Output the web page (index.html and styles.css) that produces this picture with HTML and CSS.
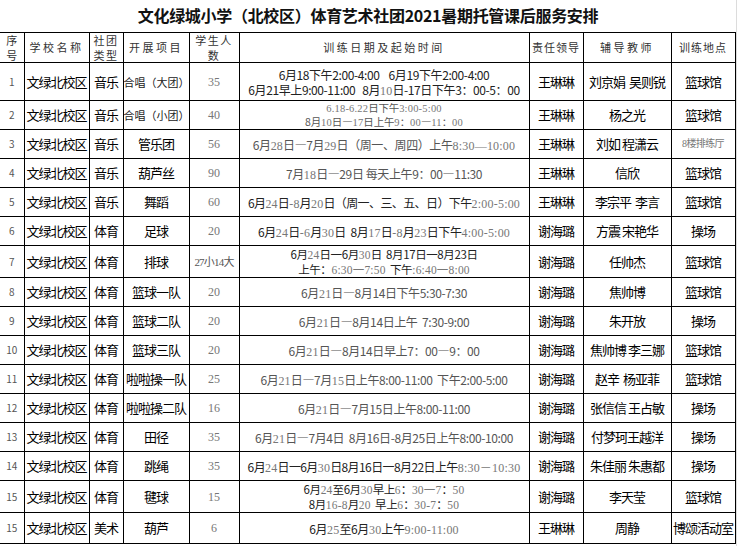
FILE: index.html
```html
<!DOCTYPE html>
<html lang="zh">
<head>
<meta charset="utf-8">
<title>文化绿城小学（北校区）体育艺术社团2021暑期托管课后服务安排</title>
<link rel="stylesheet" href="styles.css">
</head>
<body>
<div class="sheet">
  <h1 class="title">文化绿城小学（北校区）体育艺术社团2021暑期托管课后服务安排</h1>
  <table class="grid">
    <colgroup>
      <col class="c-no"><col class="c-school"><col class="c-type"><col class="c-proj"><col class="c-num"><col class="c-date"><col class="c-lead"><col class="c-teach"><col class="c-place">
    </colgroup>
    <thead>
      <tr class="h-head">
        <th class="first narrow">序<br>号</th>
        <th>学校名称</th>
        <th class="two">社团<br>类型</th>
        <th>开展项目</th>
        <th class="two">学生人<br>数</th>
        <th>训练日期及起始时间</th>
        <th class="lead">责任领导</th>
        <th>辅导教师</th>
        <th class="lead">训练地点</th>
      </tr>
    </thead>
    <tbody>
      <tr class="h-38">
        <td class="first no">1</td><td>文绿北校区</td><td>音乐</td><td class="proj-s">合唱（大团）</td><td class="num">35</td>
        <td class="date dark">6月18下午2:00-4:00&nbsp;&nbsp;&nbsp;&nbsp;6月19下午2:00-4:00<br>6月21早上9:00-11:00&nbsp;&nbsp;&nbsp;8月<span class="s">10</span>日-17日下午3：00-5：00</td>
        <td>王琳琳</td><td>刘京娟&nbsp;&nbsp;吴则锐</td><td>篮球馆</td>
      </tr>
      <tr class="h-29">
        <td class="first no">2</td><td>文绿北校区</td><td>音乐</td><td class="proj-s">合唱（小团）</td><td class="num">40</td>
        <td class="date small"><span class="s">6.18-6.22</span>日下午<span class="s">3:00-5:00</span><br>8月<span class="s">10</span>日—<span class="s">17</span>日上午<span class="s">9</span>：<span class="s">00</span>—<span class="s">11</span>：<span class="s">00</span></td>
        <td>王琳琳</td><td>杨之光</td><td>篮球馆</td>
      </tr>
      <tr class="h-29">
        <td class="first no">3</td><td>文绿北校区</td><td>音乐</td><td>管乐团</td><td class="num">56</td>
        <td class="date">6月<span class="s">28</span>日—7月<span class="s">29</span>日（周一、周四）上午<span class="s">8:30—10:00</span></td>
        <td>王琳琳</td><td>刘如&nbsp;程潇云</td><td class="place-s">8楼排练厅</td>
      </tr>
      <tr class="h-29">
        <td class="first no">4</td><td>文绿北校区</td><td>音乐</td><td>葫芦丝</td><td class="num">90</td>
        <td class="date">7月<span class="s">18</span>日—29日&nbsp;每天上午9：00—11:30</td>
        <td>王琳琳</td><td>信欣</td><td>篮球馆</td>
      </tr>
      <tr class="h-29">
        <td class="first no">5</td><td>文绿北校区</td><td>音乐</td><td>舞蹈</td><td class="num">60</td>
        <td class="date dark wide">6月<span class="s">24</span>日<span class="s">-8</span>月<span class="s">20</span>日（周一、三、五、日）下午<span class="s">2:00-5:00</span></td>
        <td>王琳琳</td><td>李宗平&nbsp;&nbsp;李言</td><td>篮球馆</td>
      </tr>
      <tr class="h-29">
        <td class="first no">6</td><td>文绿北校区</td><td>体育</td><td>足球</td><td class="num">20</td>
        <td class="date dark">6月<span class="s">24</span>日<span class="s">-6</span>月<span class="s">30</span>日&nbsp;&nbsp;8月<span class="s">17</span>日<span class="s">-8</span>月<span class="s">23</span>日下午<span class="s">4:00-5:00</span></td>
        <td>谢海璐</td><td>方震&nbsp;宋艳华</td><td>操场</td>
      </tr>
      <tr class="h-32">
        <td class="first no">7</td><td>文绿北校区</td><td>体育</td><td>排球</td><td class="num tight">27小14大</td>
        <td class="date dark lines">6月<span class="s">24</span>日一6月<span class="s">30</span>日&nbsp;&nbsp;8月17日一8月23日<br>上午：<span class="s">6:30一7:50</span>&nbsp;&nbsp;下午<span class="s">:6:40一8:00</span></td>
        <td>谢海璐</td><td>任帅杰</td><td>篮球馆</td>
      </tr>
      <tr class="h-29">
        <td class="first no">8</td><td>文绿北校区</td><td>体育</td><td>篮球一队</td><td class="num">20</td>
        <td class="date">6月<span class="s">21</span>日—8月14日下午5:30-7:30</td>
        <td>谢海璐</td><td>焦帅博</td><td>篮球馆</td>
      </tr>
      <tr class="h-29">
        <td class="first no">9</td><td>文绿北校区</td><td>体育</td><td>篮球二队</td><td class="num">20</td>
        <td class="date">6月<span class="s">21</span>日—8月14日上午&nbsp;&nbsp;7:30-9:00</td>
        <td>谢海璐</td><td>朱开放</td><td>操场</td>
      </tr>
      <tr class="h-29">
        <td class="first no">10</td><td>文绿北校区</td><td>体育</td><td>篮球三队</td><td class="num">20</td>
        <td class="date">6月<span class="s">21</span>日—8月14日早上7：00—9：00</td>
        <td>谢海璐</td><td>焦帅博&nbsp;李三娜</td><td>篮球馆</td>
      </tr>
      <tr class="h-29">
        <td class="first no">11</td><td>文绿北校区</td><td>体育</td><td>啦啦操一队</td><td class="num">25</td>
        <td class="date">6月<span class="s">21</span>日—7月<span class="s">15</span>日上午8:00-11:00&nbsp;&nbsp;下午2:00-5:00</td>
        <td>谢海璐</td><td>赵辛&nbsp;&nbsp;杨亚菲</td><td>篮球馆</td>
      </tr>
      <tr class="h-29">
        <td class="first no">12</td><td>文绿北校区</td><td>体育</td><td>啦啦操二队</td><td class="num">16</td>
        <td class="date">6月<span class="s">21</span>日—7月15日上午8:00-11:00</td>
        <td>谢海璐</td><td>张信信&nbsp;王占敏</td><td>操场</td>
      </tr>
      <tr class="h-29">
        <td class="first no">13</td><td>文绿北校区</td><td>体育</td><td>田径</td><td class="num">35</td>
        <td class="date">6月<span class="s">21</span>日—7月4日&nbsp;&nbsp;8月16日-8月25日上午8:00-10:00</td>
        <td>谢海璐</td><td>付梦珂王越洋</td><td>操场</td>
      </tr>
      <tr class="h-29">
        <td class="first no">14</td><td>文绿北校区</td><td>体育</td><td>跳绳</td><td class="num">35</td>
        <td class="date dark wide">6月<span class="s">24</span>日一6月<span class="s">30</span>日8月16日一8月22日上午<span class="s">8:30－10:30</span></td>
        <td>谢海璐</td><td>朱佳丽&nbsp;朱惠都</td><td>操场</td>
      </tr>
      <tr class="h-32">
        <td class="first no">15</td><td>文绿北校区</td><td>体育</td><td>毽球</td><td class="num">15</td>
        <td class="date dark lines">6月<span class="s">24</span>至6月<span class="s">30</span>早上<span class="s">6</span>：<span class="s">30一7</span>：<span class="s">50</span><br>8月<span class="s">16-8</span>月<span class="s">20</span>&nbsp;&nbsp;早上<span class="s">6</span>：<span class="s">30-7</span>：<span class="s">50</span></td>
        <td>谢海璐</td><td>李天莹</td><td>篮球馆</td>
      </tr>
      <tr class="h-31">
        <td class="first no">15</td><td>文绿北校区</td><td>美术</td><td>葫芦</td><td class="num">6</td>
        <td class="date dark">6月<span class="s">25</span>至6月<span class="s">30</span>上午<span class="s">9:00-11:00</span></td>
        <td>王琳琳</td><td>周静</td><td>博颂活动室</td>
      </tr>
    </tbody>
  </table>
</div>
</body>
</html>
```

FILE: styles.css
```css
html, body {
  margin: 0;
  padding: 0;
  background: #ffffff;
}

body {
  width: 738px;
  height: 546px;
  overflow: hidden;
  font-family: "Noto Sans CJK SC", "Noto Sans", sans-serif;
  color: #000;
}

.sheet {
  width: 736px;
  height: 546px;
  border-right: 1px solid #dcdcdc;
}

.title {
  margin: 0;
  height: 32px;
  box-sizing: border-box;
  padding-top: 5px;
  font-size: 16px;
  line-height: 20px;
  font-weight: 700;
  text-align: center;
  letter-spacing: -0.3px;
  color: #111;
  white-space: nowrap;
}

.grid {
  border-collapse: collapse;
  table-layout: fixed;
  width: 735px;
}

.c-no { width: 24px; }
.c-school { width: 65px; }
.c-type { width: 34px; }
.c-proj { width: 66px; }
.c-num { width: 50px; }
.c-date { width: 290px; }
.c-lead { width: 54px; }
.c-teach { width: 88px; }
.c-place { width: 64px; }

.grid th,
.grid td {
  border: 1px solid #000;
  padding: 0;
  text-align: center;
  vertical-align: middle;
  white-space: nowrap;
  overflow: hidden;
  font-size: 13px;
  line-height: 16px;
  letter-spacing: -1px;
  font-weight: 400;
}

.grid .first {
  border-left: none;
}

.grid th {
  height: 29px;
  font-size: 11px;
  line-height: 14.5px;
  letter-spacing: 2.5px;
  color: #333;
}

.grid th.two {
  letter-spacing: 1.5px;
}

.grid th.narrow {
  letter-spacing: 0;
}

.grid th.lead {
  letter-spacing: 1px;
}

.h-38 td { height: 37px; }
.h-29 td { height: 28px; }
.h-32 td { height: 31px; }
.h-31 td { height: 30px; }

.grid td.no {
  font-size: 10px;
  letter-spacing: 0;
  color: #555;
}

.grid td.num {
  font-family: "Liberation Serif", "Noto Sans CJK SC", serif;
  font-size: 12px;
  letter-spacing: 0;
  color: #777;
}

.grid td.num.tight {
  font-size: 11px;
  letter-spacing: -0.8px;
  color: #555;
}

.grid td.proj-s {
  font-size: 11px;
  letter-spacing: 0;
  text-align: left;
  color: #222;
}

.grid td.place-s {
  font-family: "Liberation Serif", "Noto Sans CJK SC", serif;
  font-size: 10px;
  letter-spacing: -0.6px;
  color: #777;
}

.grid td.date {
  font-size: 12px;
  line-height: 15px;
  letter-spacing: -0.4px;
  color: #555;
}

.grid td.date.small {
  font-size: 10.5px;
  line-height: 14px;
  letter-spacing: -0.2px;
}

.grid td.date.lines {
  font-size: 11.5px;
  line-height: 15px;
}

.grid td.date.wide {
  letter-spacing: -0.6px;
}

.grid td.date.dark {
  color: #222;
}

.s {
  font-family: "Liberation Serif", "Noto Sans CJK SC", serif;
  color: #777;
  letter-spacing: 0.2px;
  line-height: 1;
}
```
